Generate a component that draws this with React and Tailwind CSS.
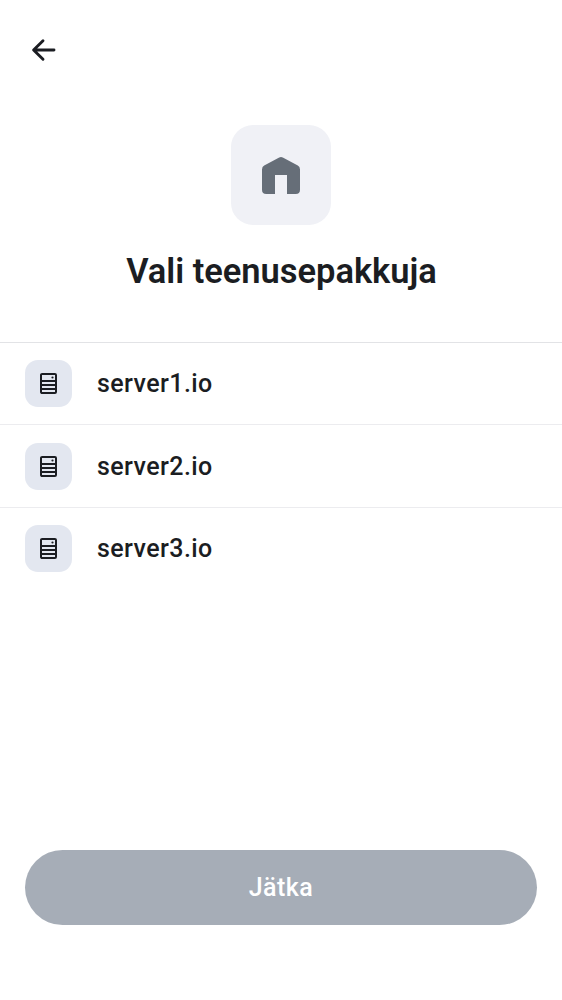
function BackIcon() {
  return (
    <svg width="25" height="24" viewBox="0 0 25 24" fill="none" stroke="#1b1d22" strokeWidth="2.9" strokeLinecap="round" strokeLinejoin="round">
      <path d="M23 12H3M12 2.7L2.6 12L12 21.3" />
    </svg>
  );
}

function HomeIcon() {
  return (
    <svg width="38" height="38" viewBox="0 0 38 38" fill="#666e78">
      <path d="M17.2 1.4Q19 .4 20.8 1.4L35.8 9.6Q38 10.8 38 13.4V33.7Q38 38 33.7 38H25V19H13V38H4.3Q0 38 0 33.7V13.4Q0 10.8 2.2 9.6Z" />
    </svg>
  );
}

function ServerIcon() {
  return (
    <svg width="17" height="21" viewBox="0 0 17 21" fill="none" stroke="#1b1d22" strokeWidth="2">
      <rect x="1" y="1" width="15" height="19" rx="1.1" />
      <path d="M1 7.9H16M1 11.9H16M1 15.9H16" strokeWidth="2" />
      <circle cx="12.5" cy="4.5" r="1.1" fill="#1b1d22" stroke="none" />
    </svg>
  );
}

const servers = ["server1.io", "server2.io", "server3.io"];

export default function App() {
  return (
    <main className="flex h-[1000px] w-full flex-col bg-white font-['Roboto',sans-serif] text-[#1b1d22]">
      <header className="pt-[38px] pl-[31px]">
        <button aria-label="Tagasi" className="block"><BackIcon /></button>
      </header>
      <section className="flex flex-col items-center pt-[63px]">
        <div className="flex h-[100px] w-[100px] items-center justify-center rounded-[22px] bg-[#f0f1f6]">
          <HomeIcon />
        </div>
        <h1 className="mt-[25px] mb-px pl-px text-[34.5px] leading-[42px] font-[640] whitespace-nowrap tracking-[-0.03px]">Vali teenusepakkuja</h1>
      </section>
      <ul className="mt-[49px]">
        {servers.map((name) => (
          <li key={name} className="flex h-[82.4px] items-center gap-[25px] border-t border-[#ececef] px-[25px] first:border-[#e2e3e6]">
            <span className="flex h-[47px] w-[47px] items-center justify-center rounded-[13px] bg-[#e3e7f0]">
              <ServerIcon />
            </span>
            <span className="pt-px text-[25px] leading-[30px] font-[480] tracking-[0.42px]">{name}</span>
          </li>
        ))}
      </ul>
      <div className="mt-auto px-[25px] pb-[75px]">
        <button className="h-[75px] w-full rounded-full bg-[#a6adb7] text-[25px] font-[480] tracking-[0.5px] text-white">Jätka</button>
      </div>
    </main>
  );
}
